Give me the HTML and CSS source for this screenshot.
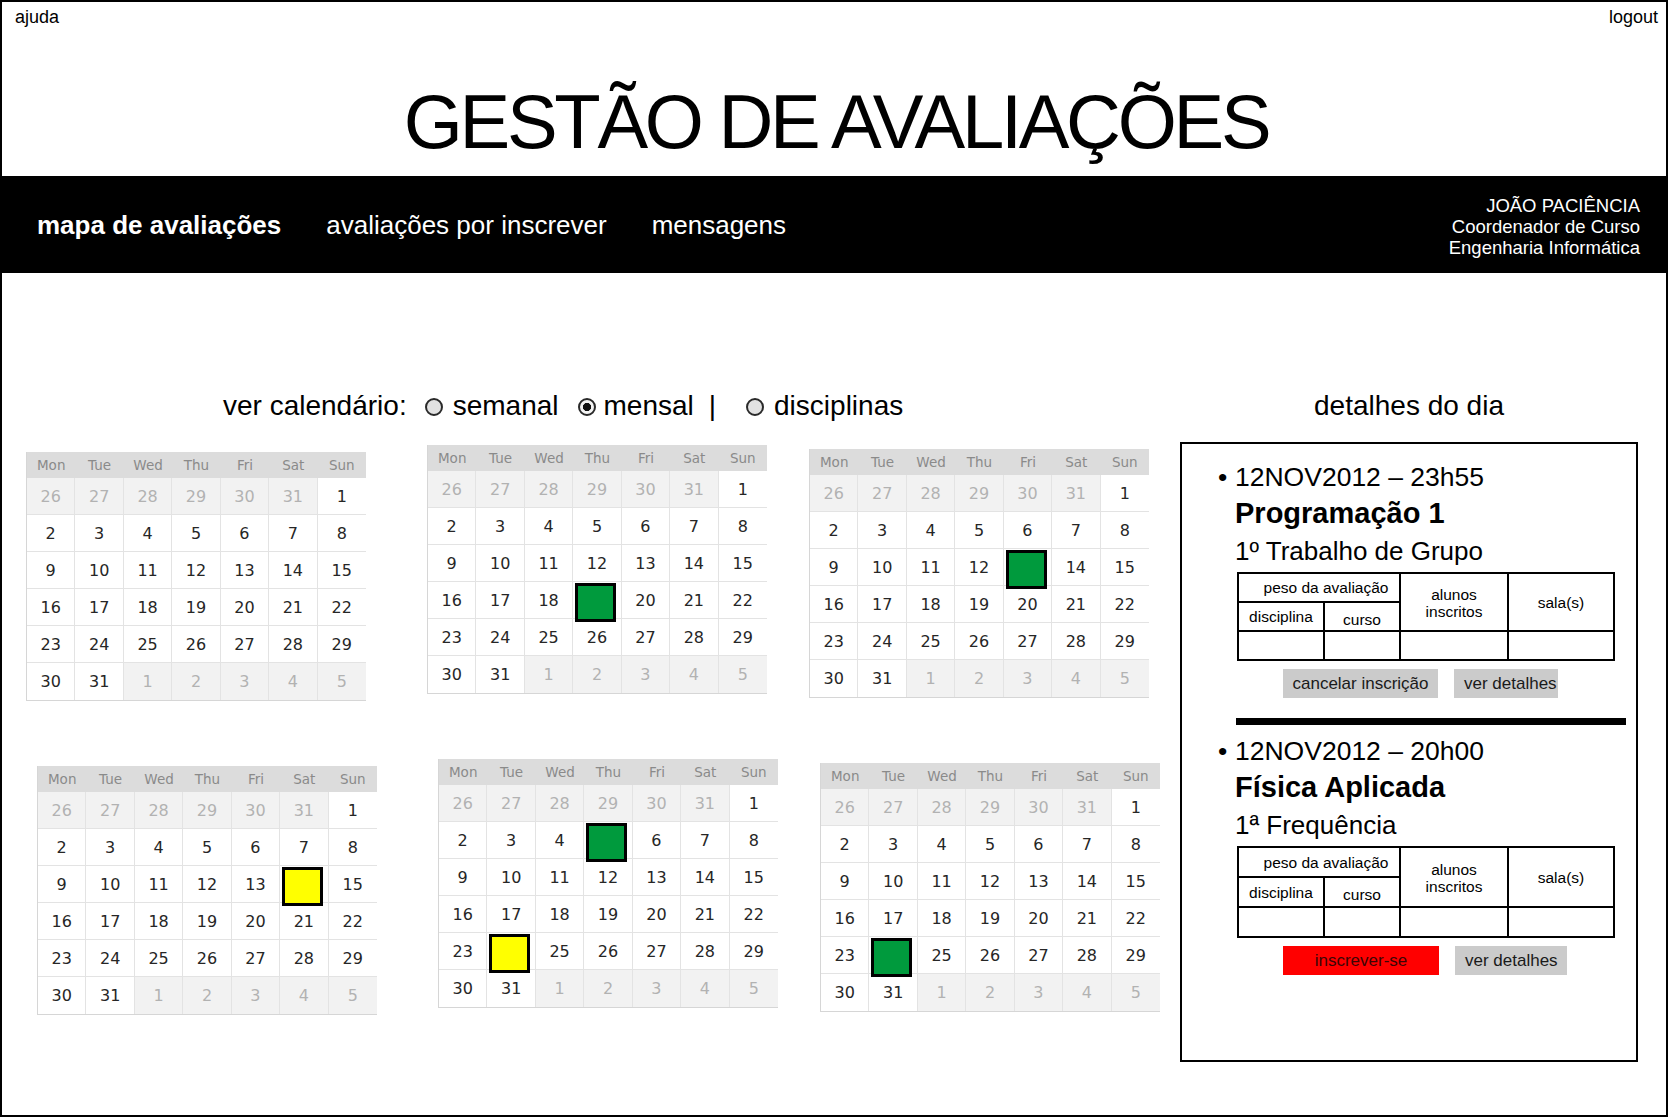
FILE: index.html
```html
<!DOCTYPE html>
<html lang="pt">
<head>
<meta charset="utf-8">
<title>Gestão de Avaliações</title>
<link rel="stylesheet" href="styles.css">
</head>
<body>
<div class="page">
  <header class="masthead">
    <div class="toplinks"><a class="toplink">ajuda</a><a class="toplink">logout</a></div>
    <h1 class="title">GESTÃO DE AVALIAÇÕES</h1>
  </header>

  <nav class="nav">
    <div class="nav-links">
      <a class="nav-link active">mapa de avaliações</a>
      <a class="nav-link">avaliações por inscrever</a>
      <a class="nav-link">mensagens</a>
    </div>
    <div class="user">
      <div>JOÃO PACIÊNCIA</div>
      <div>Coordenador de Curso</div>
      <div>Engenharia Informática</div>
    </div>
  </nav>

  <main class="main">
    <section class="cals-col">
      <div class="viewbar">
        <span class="vlabel">ver calendário:</span>
        <span class="radio"></span><span class="opt">semanal</span>
        <span class="radio on"></span><span class="opt opt-m">mensal</span>
        <span class="sep">|</span>
        <span class="radio"></span><span class="opt">disciplinas</span>
      </div>

      <div class="cal-row first">
        <div class="cal s1">
          <div class="cal-head"><span>Mon</span><span>Tue</span><span>Wed</span><span>Thu</span><span>Fri</span><span>Sat</span><span>Sun</span></div>
          <div class="cal-body">
            <span class="d o">26</span><span class="d o">27</span><span class="d o">28</span><span class="d o">29</span><span class="d o">30</span><span class="d o">31</span><span class="d">1</span>
            <span class="d">2</span><span class="d">3</span><span class="d">4</span><span class="d">5</span><span class="d">6</span><span class="d">7</span><span class="d">8</span>
            <span class="d">9</span><span class="d">10</span><span class="d">11</span><span class="d">12</span><span class="d">13</span><span class="d">14</span><span class="d">15</span>
            <span class="d">16</span><span class="d">17</span><span class="d">18</span><span class="d">19</span><span class="d">20</span><span class="d">21</span><span class="d">22</span>
            <span class="d">23</span><span class="d">24</span><span class="d">25</span><span class="d">26</span><span class="d">27</span><span class="d">28</span><span class="d">29</span>
            <span class="d">30</span><span class="d">31</span><span class="d o">1</span><span class="d o">2</span><span class="d o">3</span><span class="d o">4</span><span class="d o">5</span>
          </div>
        </div>

        <div class="cal s2">
          <div class="cal-head"><span>Mon</span><span>Tue</span><span>Wed</span><span>Thu</span><span>Fri</span><span>Sat</span><span>Sun</span></div>
          <div class="cal-body">
            <span class="d o">26</span><span class="d o">27</span><span class="d o">28</span><span class="d o">29</span><span class="d o">30</span><span class="d o">31</span><span class="d">1</span>
            <span class="d">2</span><span class="d">3</span><span class="d">4</span><span class="d">5</span><span class="d">6</span><span class="d">7</span><span class="d">8</span>
            <span class="d">9</span><span class="d">10</span><span class="d">11</span><span class="d">12</span><span class="d">13</span><span class="d">14</span><span class="d">15</span>
            <span class="d">16</span><span class="d">17</span><span class="d">18</span><span class="d"><i class="mark green"></i></span><span class="d">20</span><span class="d">21</span><span class="d">22</span>
            <span class="d">23</span><span class="d">24</span><span class="d">25</span><span class="d">26</span><span class="d">27</span><span class="d">28</span><span class="d">29</span>
            <span class="d">30</span><span class="d">31</span><span class="d o">1</span><span class="d o">2</span><span class="d o">3</span><span class="d o">4</span><span class="d o">5</span>
          </div>
        </div>

        <div class="cal s3">
          <div class="cal-head"><span>Mon</span><span>Tue</span><span>Wed</span><span>Thu</span><span>Fri</span><span>Sat</span><span>Sun</span></div>
          <div class="cal-body">
            <span class="d o">26</span><span class="d o">27</span><span class="d o">28</span><span class="d o">29</span><span class="d o">30</span><span class="d o">31</span><span class="d">1</span>
            <span class="d">2</span><span class="d">3</span><span class="d">4</span><span class="d">5</span><span class="d">6</span><span class="d">7</span><span class="d">8</span>
            <span class="d">9</span><span class="d">10</span><span class="d">11</span><span class="d">12</span><span class="d"><i class="mark green"></i></span><span class="d">14</span><span class="d">15</span>
            <span class="d">16</span><span class="d">17</span><span class="d">18</span><span class="d">19</span><span class="d">20</span><span class="d">21</span><span class="d">22</span>
            <span class="d">23</span><span class="d">24</span><span class="d">25</span><span class="d">26</span><span class="d">27</span><span class="d">28</span><span class="d">29</span>
            <span class="d">30</span><span class="d">31</span><span class="d o">1</span><span class="d o">2</span><span class="d o">3</span><span class="d o">4</span><span class="d o">5</span>
          </div>
        </div>
      </div>

      <div class="cal-row second">
        <div class="cal s1">
          <div class="cal-head"><span>Mon</span><span>Tue</span><span>Wed</span><span>Thu</span><span>Fri</span><span>Sat</span><span>Sun</span></div>
          <div class="cal-body">
            <span class="d o">26</span><span class="d o">27</span><span class="d o">28</span><span class="d o">29</span><span class="d o">30</span><span class="d o">31</span><span class="d">1</span>
            <span class="d">2</span><span class="d">3</span><span class="d">4</span><span class="d">5</span><span class="d">6</span><span class="d">7</span><span class="d">8</span>
            <span class="d">9</span><span class="d">10</span><span class="d">11</span><span class="d">12</span><span class="d">13</span><span class="d"><i class="mark yellow"></i></span><span class="d">15</span>
            <span class="d">16</span><span class="d">17</span><span class="d">18</span><span class="d">19</span><span class="d">20</span><span class="d">21</span><span class="d">22</span>
            <span class="d">23</span><span class="d">24</span><span class="d">25</span><span class="d">26</span><span class="d">27</span><span class="d">28</span><span class="d">29</span>
            <span class="d">30</span><span class="d">31</span><span class="d o">1</span><span class="d o">2</span><span class="d o">3</span><span class="d o">4</span><span class="d o">5</span>
          </div>
        </div>

        <div class="cal s2">
          <div class="cal-head"><span>Mon</span><span>Tue</span><span>Wed</span><span>Thu</span><span>Fri</span><span>Sat</span><span>Sun</span></div>
          <div class="cal-body">
            <span class="d o">26</span><span class="d o">27</span><span class="d o">28</span><span class="d o">29</span><span class="d o">30</span><span class="d o">31</span><span class="d">1</span>
            <span class="d">2</span><span class="d">3</span><span class="d">4</span><span class="d"><i class="mark green"></i></span><span class="d">6</span><span class="d">7</span><span class="d">8</span>
            <span class="d">9</span><span class="d">10</span><span class="d">11</span><span class="d">12</span><span class="d">13</span><span class="d">14</span><span class="d">15</span>
            <span class="d">16</span><span class="d">17</span><span class="d">18</span><span class="d">19</span><span class="d">20</span><span class="d">21</span><span class="d">22</span>
            <span class="d">23</span><span class="d"><i class="mark yellow"></i></span><span class="d">25</span><span class="d">26</span><span class="d">27</span><span class="d">28</span><span class="d">29</span>
            <span class="d">30</span><span class="d">31</span><span class="d o">1</span><span class="d o">2</span><span class="d o">3</span><span class="d o">4</span><span class="d o">5</span>
          </div>
        </div>

        <div class="cal s3">
          <div class="cal-head"><span>Mon</span><span>Tue</span><span>Wed</span><span>Thu</span><span>Fri</span><span>Sat</span><span>Sun</span></div>
          <div class="cal-body">
            <span class="d o">26</span><span class="d o">27</span><span class="d o">28</span><span class="d o">29</span><span class="d o">30</span><span class="d o">31</span><span class="d">1</span>
            <span class="d">2</span><span class="d">3</span><span class="d">4</span><span class="d">5</span><span class="d">6</span><span class="d">7</span><span class="d">8</span>
            <span class="d">9</span><span class="d">10</span><span class="d">11</span><span class="d">12</span><span class="d">13</span><span class="d">14</span><span class="d">15</span>
            <span class="d">16</span><span class="d">17</span><span class="d">18</span><span class="d">19</span><span class="d">20</span><span class="d">21</span><span class="d">22</span>
            <span class="d">23</span><span class="d"><i class="mark green"></i></span><span class="d">25</span><span class="d">26</span><span class="d">27</span><span class="d">28</span><span class="d">29</span>
            <span class="d">30</span><span class="d">31</span><span class="d o">1</span><span class="d o">2</span><span class="d o">3</span><span class="d o">4</span><span class="d o">5</span>
          </div>
        </div>
      </div>
    </section>

    <aside class="details-col">
      <h2 class="details-title">detalhes do dia</h2>
      <div class="details">
        <div class="ev">
          <div class="ev-date"><span class="bullet">•</span><span>12NOV2012 – 23h55</span></div>
          <div class="ev-body">
            <div class="ev-name">Programação 1</div>
            <div class="ev-type">1º Trabalho de Grupo</div>
            <table class="eval">
              <colgroup><col class="c1"><col class="c2"><col class="c3"><col class="c4"></colgroup>
              <tr><th colspan="2" class="peso">peso da avaliação</th><th rowspan="2" class="alunos">alunos<br>inscritos</th><th rowspan="2">sala(s)</th></tr>
              <tr><th>disciplina</th><th class="curso">curso</th></tr>
              <tr><td></td><td></td><td></td><td></td></tr>
            </table>
            <div class="ev-actions">
              <span class="btn cancel">cancelar inscrição</span>
              <span class="btn more">ver detalhes</span>
            </div>
          </div>
        </div>

        <div class="ev-sep"></div>

        <div class="ev second">
          <div class="ev-date"><span class="bullet">•</span><span>12NOV2012 – 20h00</span></div>
          <div class="ev-body">
            <div class="ev-name">Física Aplicada</div>
            <div class="ev-type">1ª Frequência</div>
            <table class="eval tall">
              <colgroup><col class="c1"><col class="c2"><col class="c3"><col class="c4"></colgroup>
              <tr><th colspan="2" class="peso">peso da avaliação</th><th rowspan="2" class="alunos">alunos<br>inscritos</th><th rowspan="2">sala(s)</th></tr>
              <tr><th>disciplina</th><th class="curso">curso</th></tr>
              <tr><td></td><td></td><td></td><td></td></tr>
            </table>
            <div class="ev-actions">
              <span class="btn join">inscrever-se</span>
              <span class="btn more wide">ver detalhes</span>
            </div>
          </div>
        </div>
      </div>
    </aside>
  </main>
</div>
</body>
</html>
```

FILE: styles.css
```css
* { box-sizing: border-box; }

html, body {
  margin: 0;
  padding: 0;
  background: #fff;
}

body {
  font-family: "Liberation Sans", Arial, Helvetica, sans-serif;
  color: #000;
}

.page {
  width: 1668px;
  height: 1117px;
  border: 2px solid #000;
  display: flex;
  flex-direction: column;
}

/* ---------- masthead ---------- */
.masthead {
  height: 174px;
  flex: none;
}

.toplinks {
  display: flex;
  justify-content: space-between;
  padding: 5px 8px 0 13px;
  font-size: 18px;
  line-height: 20px;
}

.toplink { color: #000; }

.title {
  margin: 55px 0 0;
  padding-left: 4px;
  text-align: center;
  font-size: 76px;
  line-height: 80px;
  font-weight: normal;
  letter-spacing: -3.3px;
}

/* ---------- nav ---------- */
.nav {
  flex: none;
  height: 97px;
  background: #000;
  color: #fff;
  display: flex;
  align-items: center;
  padding: 0 26px 0 35px;
}

.nav-links {
  display: flex;
  gap: 45px;
  font-size: 26px;
  line-height: 30px;
}

.nav-link.active { font-weight: bold; }

.user {
  margin-left: auto;
  padding-top: 4px;
  text-align: right;
  font-size: 18.5px;
  line-height: 21px;
}

/* ---------- main ---------- */
.main {
  display: flex;
  flex: 1;
}

.cals-col {
  width: 1178px;
  flex: none;
}

.viewbar {
  margin-top: 117px;
  padding-left: 221px;
  height: 32px;
  display: flex;
  align-items: center;
  font-size: 28px;
  line-height: 32px;
}

.vlabel { margin-right: 18px; }

.radio {
  width: 18px;
  height: 18px;
  flex: none;
  border-radius: 50%;
  border: 2px solid #2a2a2a;
  background: #e2e2e2;
  margin-right: 10px;
  margin-top: 1px;
}

.radio.on {
  background: radial-gradient(circle, #111 0 3.8px, #f4f4f4 4.4px);
  margin-right: 8px;
}

.opt { margin-right: 19px; }
.opt-m { margin-right: 15px; }
.sep { margin-right: 30px; }

/* ---------- calendars ---------- */
.cal-row {
  display: flex;
  align-items: flex-start;
  padding-left: 24px;
}

.cal-row.first { margin-top: 23px; }
.cal-row.second { margin-top: 58px; padding-left: 35px; }

.cal {
  width: 340px;
  flex: none;
  border-left: 1px solid #d6d6d6;
  border-bottom: 1px solid #d6d6d6;
  font-family: "DejaVu Sans", Verdana, sans-serif;
}

.cal.s1 { margin-top: 7px; margin-right: 61px; }
.cal.s2 { margin-right: 42px; }
.cal.s3 { margin-top: 4px; }

.cal-head {
  display: grid;
  grid-template-columns: repeat(7, 1fr);
  height: 26px;
  align-items: center;
  text-align: center;
  background: #dcdcdc;
  color: #8a8a8a;
  font-size: 13.5px;
}

.cal-body {
  display: grid;
  grid-template-columns: repeat(7, 1fr);
  grid-auto-rows: 37px;
}

.d {
  position: relative;
  display: flex;
  align-items: center;
  justify-content: center;
  border-right: 1px solid #e3e3e3;
  border-bottom: 1px solid #e3e3e3;
  background: #fff;
  color: #262626;
  font-size: 16px;
}

.d:nth-child(7n) { border-right: none; }
.d:nth-last-child(-n+7) { border-bottom: none; }

.d.o {
  background: #f2f2f2;
  color: #b2b2b2;
}

.mark {
  position: absolute;
  left: 2px;
  top: 1px;
  width: 41px;
  height: 39px;
  border: 3px solid #000;
  z-index: 1;
}

.mark.green { background: #009a3d; }
.mark.yellow { background: #ffff00; }

/* ---------- details ---------- */
.details-col {
  width: 458px;
  flex: none;
}

.details-title {
  margin: 117px 0 0;
  font-size: 28px;
  line-height: 32px;
  font-weight: normal;
  text-align: center;
}

.details {
  margin-top: 20px;
  height: 620px;
  border: 2px solid #000;
  padding: 17px 0 0 36px;
}

.ev-date {
  display: flex;
  font-size: 26.5px;
  line-height: 32px;
}

.bullet { width: 17px; flex: none; }

.ev-body { margin-left: 17px; }

.ev-name {
  font-size: 29px;
  line-height: 41px;
  font-weight: bold;
}

.ev-type {
  font-size: 26px;
  line-height: 35px;
}

.eval {
  margin: 3px 0 0 2px;
  width: 376px;
  border-collapse: collapse;
  table-layout: fixed;
}

.eval .c1 { width: 86px; }
.eval .c2 { width: 76px; }
.eval .c3 { width: 108px; }
.eval .c4 { width: 106px; }

.eval th,
.eval td {
  border: 2px solid #000;
  padding: 0;
  height: 29px;
  font-weight: normal;
  font-size: 15.5px;
  line-height: 17px;
  text-align: center;
  vertical-align: middle;
}

.eval.tall th,
.eval.tall td { height: 30px; }

.eval .peso { padding-left: 14px; }
.eval .curso { padding-top: 5px; }
.eval .alunos { padding-top: 2px; }

.ev-actions {
  display: flex;
  gap: 16px;
  margin: 8px 0 0 48px;
}

.btn {
  display: block;
  height: 29px;
  font-size: 17px;
  line-height: 30px;
  text-align: center;
  white-space: nowrap;
  background: #cbcbcb;
  color: #1a1a1a;
}

.btn.cancel { width: 155px; }
.btn.more { width: 104px; text-align: left; padding-left: 10px; }
.btn.more.wide { width: 112px; }
.btn.join { width: 156px; background: #ff0000; color: #3a0606; }

.ev-sep {
  margin: 20px 0 0 18px;
  width: 390px;
  height: 7px;
  background: #000;
}

.ev.second { margin-top: 10px; }
```
